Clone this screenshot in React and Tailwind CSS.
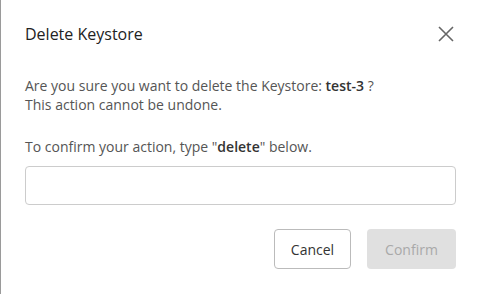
import { useState } from 'react';

const DeleteKeystore = () => {
  const [value, setValue] = useState('');

  return (
    <div className="w-[480px] h-[294px] bg-white border-l border-[#9a9a9a] font-['Open_Sans',sans-serif] text-[#555]">
      <div className="flex items-center justify-between pl-6 pr-6 pt-[22px]">
        <h1 className="text-[16px] text-[#222]">Delete Keystore</h1>
        <button className="w-5 h-5 flex items-center justify-center text-[#666]">
          <svg width="16" height="16" viewBox="0 0 16 16" fill="none" stroke="currentColor" strokeWidth="1.6">
            <path d="M1 1L15 15M15 1L1 15" />
          </svg>
        </button>
      </div>

      <div className="px-6 mt-[30px] text-[14px] leading-[19px]">
        <p>
          Are you sure you want to delete the Keystore: <span className="font-semibold text-[#333]">test-3</span> ?
        </p>
        <p>This action cannot be undone.</p>
        <p className="mt-[23px]">
          To confirm your action, type "<span className="font-semibold text-[#333]">delete</span>" below.
        </p>
        <input
          className="mt-[10px] w-full h-[39px] px-3 rounded border border-[#ccc] outline-none"
          value={value}
          onChange={(e) => setValue(e.target.value)}
        />
      </div>

      <div className="flex justify-end gap-[16px] px-6 mt-[24px]">
        <button className="w-[77px] h-[40px] rounded border border-[#bbb] text-[14px] text-[#333]">Cancel</button>
        <button disabled className="w-[89px] h-[40px] rounded bg-[#e0e0e0] text-[14px] text-[#a9a9a9]">Confirm</button>
      </div>
    </div>
  );
}

export default DeleteKeystore;
